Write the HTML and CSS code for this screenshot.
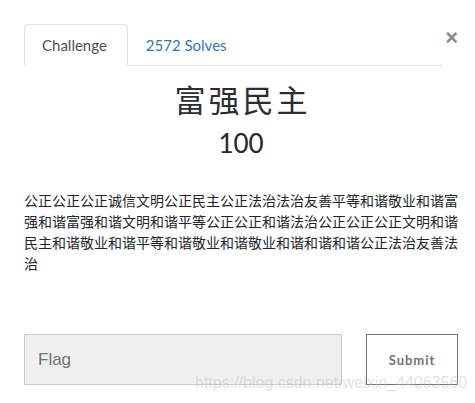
FILE: index.html
```html
<!DOCTYPE html>
<html lang="zh">
<head>
    <meta charset="UTF-8">
    <meta name="viewport" content="width=device-width, initial-scale=1.0">
    <title>Challenge</title>
    <link rel="stylesheet" href="styles.css">
</head>
<body>

<div class="modal">
    <div class="modal-head">
        <ul class="tabs">
            <li class="tab active">Challenge</li>
            <li class="tab"><a href="#solves">2572 Solves</a></li>
        </ul>
        <button class="close" aria-label="Close">&times;</button>
    </div>

    <h2 class="chal-name">富强民主</h2>
    <h3 class="chal-value">100</h3>

    <p class="chal-desc">公正公正公正诚信文明公正民主公正法治法治友善平等和谐敬业和谐富强和谐富强和谐文明和谐平等公正公正和谐法治公正公正公正文明和谐民主和谐敬业和谐平等和谐敬业和谐敬业和谐和谐和谐公正法治友善法治</p>

    <form class="flag-form">
        <input type="text" class="flag-input" placeholder="Flag">
        <button type="submit" class="submit-btn">Submit</button>
    </form>
</div>

<span class="watermark">https://blog.csdn.net/weixin_44063560</span>

</body>
</html>
```

FILE: styles.css
```css
body {
    margin: 0;
    padding: 0;
    background-color: #fff;
    font-family: Lato, "Noto Sans CJK SC", sans-serif;
    color: #212529;
}

.modal {
    padding: 24px 17px 0 24px;
}

.modal-head {
    display: flex;
    align-items: flex-start;
}

.tabs {
    list-style: none;
    margin: 0;
    padding: 0;
    display: flex;
    width: 420px;
    border-bottom: 1px solid #dee2e6;
}

.tab {
    padding: 9px 20px 0 17px;
    height: 31px;
    font-size: 15px;
    line-height: 22px;
    margin-bottom: -1px;
    border: 1px solid transparent;
    border-radius: 4px 4px 0 0;
}

.tab.active {
    color: #495057;
    border-color: #dee2e6 #dee2e6 #fff;
    background-color: #fff;
}

.tab a {
    color: #3273c3;
    text-decoration: none;
}

.close {
    margin: 3px 0 0 2px;
    padding: 0;
    border: none;
    background: none;
    font-family: "Liberation Sans", sans-serif;
    font-size: 22px;
    font-weight: bold;
    line-height: 22px;
    color: #888;
    cursor: pointer;
}

.chal-name {
    margin: 15px 0 0;
    padding-left: 3px;
    text-align: center;
    font-size: 31px;
    font-weight: normal;
    letter-spacing: 3px;
    line-height: 38px;
    color: #2a2e33;
}

.chal-value {
    margin: 9px 0 0;
    text-align: center;
    font-size: 26px;
    font-weight: normal;
    line-height: 31px;
}

.chal-desc {
    margin: 31px 0 0;
    font-family: "Noto Sans CJK SC", sans-serif;
    font-size: 14px;
    line-height: 21px;
    color: #212529;
    width: 434px;
}

.flag-form {
    display: flex;
    margin-top: 60px;
    width: 434px;
}

.flag-input {
    width: 318px;
    height: 51px;
    box-sizing: border-box;
    padding: 0 13px;
    border: 1px solid #ccc;
    background-color: #efefef;
    font-family: "Liberation Sans", sans-serif;
    font-size: 17px;
    color: #495057;
}

.flag-input::placeholder {
    color: #6c757d;
}

.submit-btn {
    margin-left: 24px;
    width: 92px;
    height: 51px;
    box-sizing: border-box;
    border: 1px solid #6c757d;
    background: #fff;
    color: #6c757d;
    font-family: Lato, sans-serif;
    font-size: 13px;
    font-weight: bold;
    letter-spacing: 1px;
    cursor: pointer;
}

.watermark {
    position: absolute;
    left: 195px;
    top: 374px;
    font-family: "Liberation Sans", sans-serif;
    font-size: 16px;
    color: rgba(190, 190, 190, 0.45);
    pointer-events: none;
}
```
